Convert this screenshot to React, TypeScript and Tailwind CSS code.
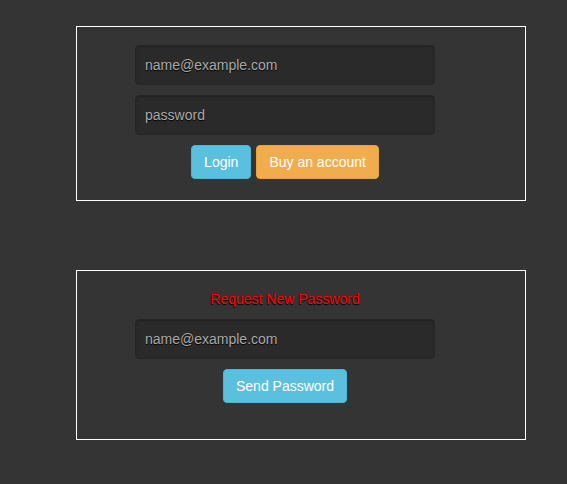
export default function App() {
  const input =
    'block w-[300px] h-10 rounded-[4px] bg-[#2a2a2a] border border-[#262626] shadow-[inset_0_1px_2px_rgba(0,0,0,0.25)] px-[9px] text-[14px] text-[#aaa] placeholder:text-[#aaa] [text-shadow:0_1px_1px_#000] outline-none'

  return (
    <div className="min-h-screen bg-[#343434] pt-[26px] pl-[76px] font-['Liberation_Sans',Arial,sans-serif]">
      {/* login */}
      <div className="w-[450px] h-[175px] border border-white pt-[18px] pl-[58px]">
        <div className="w-[300px] flex flex-col gap-[10px]">
          <input className={input} placeholder="name@example.com" />
          <input className={input} type="password" placeholder="password" />
          <div className="flex justify-center gap-[5px]">
            <button className="h-[34px] px-3 rounded-[4px] bg-[#5bc0de] border border-[#46b8da] text-white text-[14px]">
              Login
            </button>
            <button className="h-[34px] px-3 rounded-[4px] bg-[#f0ad4e] border border-[#eea236] text-white text-[14px]">
              Buy an account
            </button>
          </div>
        </div>
      </div>

      {/* forgot password */}
      <div className="mt-[69px] w-[450px] h-[170px] border border-white pt-[18px] pl-[58px]">
        <div className="w-[300px] flex flex-col items-center">
          <p className="text-[14px] leading-5 text-[#f00] [text-shadow:0_1px_1px_#000] mb-[10px]">
            Request New Password
          </p>
          <input className={input} placeholder="name@example.com" />
          <button className="mt-[10px] h-[34px] px-3 rounded-[4px] bg-[#5bc0de] border border-[#46b8da] text-white text-[14px]">
            Send Password
          </button>
        </div>
      </div>
    </div>
  )
}
